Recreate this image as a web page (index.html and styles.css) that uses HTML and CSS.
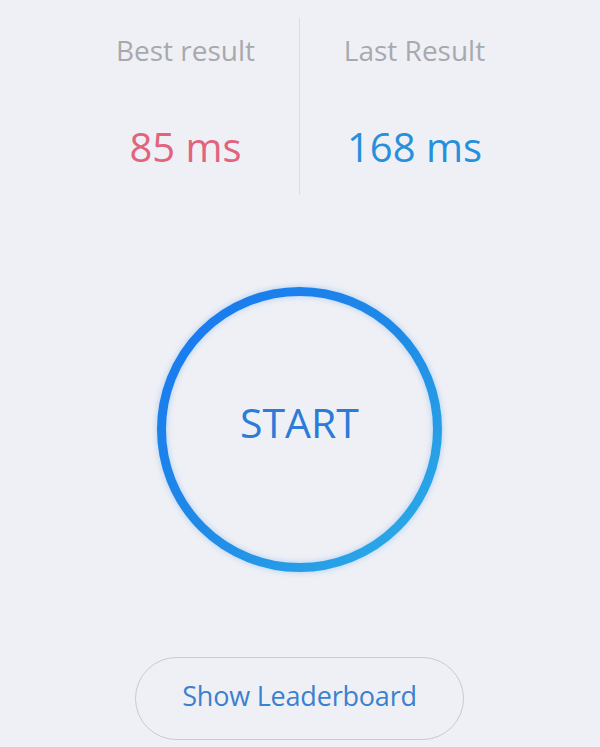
FILE: index.html
```html
<!DOCTYPE html>
<html lang="en">
<head>
<meta charset="utf-8">
<title>Reaction Test</title>
<link rel="stylesheet" href="styles.css">
</head>
<body>
<main class="app">
  <section class="stats">
    <div class="stat">
      <div class="stat-label">Best result</div>
      <div class="stat-value best">85 ms</div>
    </div>
    <div class="stat stat-right">
      <div class="stat-label">Last Result</div>
      <div class="stat-value last">168 ms</div>
    </div>
  </section>
  <section class="start-wrap">
    <div class="start">
      <svg class="ring" viewBox="0 0 285 285" width="285" height="285" aria-hidden="true">
        <defs>
          <linearGradient id="ringGrad" x1="0" y1="0" x2="1" y2="1">
            <stop offset="0" stop-color="#1877f2"/>
            <stop offset="0.5" stop-color="#1f8ae6"/>
            <stop offset="1" stop-color="#2db0e6"/>
          </linearGradient>
        </defs>
        <circle cx="142.5" cy="142.5" r="138" fill="none" stroke="url(#ringGrad)" stroke-width="9"/>
      </svg>
      <span class="start-label">START</span>
    </div>
  </section>
  <section class="actions">
    <button class="leaderboard" type="button">Show Leaderboard</button>
  </section>
</main>
</body>
</html>
```
FILE: styles.css
```css
html, body {
  margin: 0;
  padding: 0;
}
body {
  background: #eff0f5;
  font-family: "Open Sans", "Noto Sans", sans-serif;
  width: 600px;
  height: 747px;
  overflow: hidden;
}
.app {
  display: flex;
  flex-direction: column;
}
.stats {
  display: grid;
  grid-template-columns: 1fr 1fr;
  padding: 18px 71px 0;
}
.stat {
  height: 177px;
  display: flex;
  flex-direction: column;
  align-items: center;
  padding-top: 16px;
  box-sizing: border-box;
}
.stat-right {
  border-left: 1px solid #dcdde2;
  margin-left: -1px;
}
.stat-label {
  font-size: 28px;
  line-height: 33.6px;
  color: #a7a9ad;
}
.stat-value {
  margin-top: 55px;
  font-size: 40px;
  line-height: 48px;
}
.best {
  color: #e2637d;
}
.last {
  color: #2690dc;
}
.start-wrap {
  display: flex;
  justify-content: center;
  margin-top: 92px;
}
.start {
  position: relative;
  width: 285px;
  height: 285px;
  display: flex;
  align-items: center;
  justify-content: center;
  box-sizing: border-box;
  padding-bottom: 14px;
  margin-left: -1px;
}
.ring {
  position: absolute;
  left: 0;
  top: 0;
  filter: drop-shadow(0 0 3px rgba(40, 140, 240, 0.35));
}
.start-label {
  position: relative;
  font-size: 41px;
  line-height: 49px;
  color: #2b7cd9;
}
.actions {
  display: flex;
  justify-content: center;
  margin-top: 85px;
}
.leaderboard {
  width: 329px;
  height: 83px;
  border: 1.5px solid #c9cacf;
  border-radius: 42px;
  background: transparent;
  font-family: "Open Sans", "Noto Sans", sans-serif;
  font-size: 27px;
  letter-spacing: -0.2px;
  color: #3a81cf;
  padding: 0 0 6px;
  margin-left: -1px;
}
```
